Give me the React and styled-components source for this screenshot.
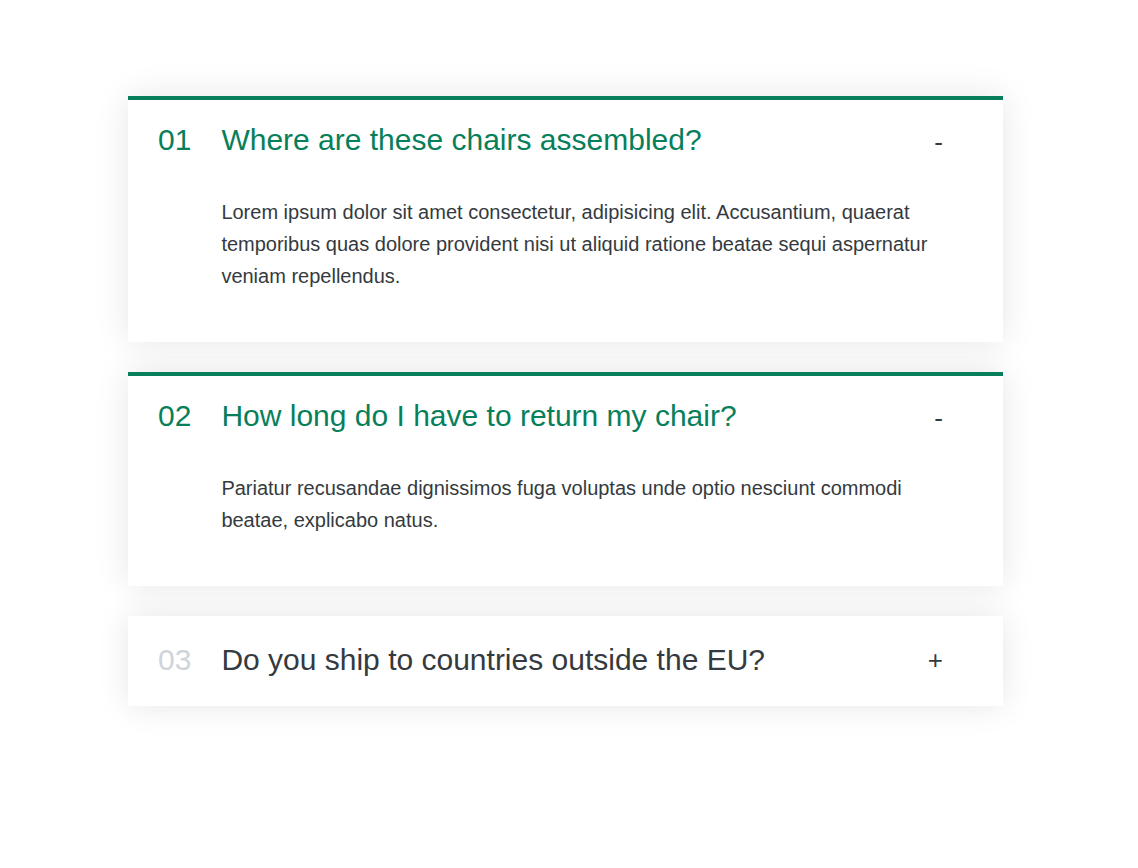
import React, { useState } from 'react'
import styled, { createGlobalStyle } from 'styled-components'

const GlobalStyle = createGlobalStyle`
  * {
    margin: 0;
    padding: 0;
    box-sizing: border-box;
  }
  html, body {
    min-height: 100%;
  }
  body {
    font-family: "Liberation Sans", Arial, sans-serif;
    color: #343a40;
    background: #fff;
    min-height: 100vh;
    padding: 96px 0 120px 128px;
  }
`

const faqs = [
  {
    title: 'Where are these chairs assembled?',
    text: 'Lorem ipsum dolor sit amet consectetur, adipisicing elit. Accusantium, quaerat temporibus quas dolore provident nisi ut aliquid ratione beatae sequi aspernatur veniam repellendus.',
  },
  {
    title: 'How long do I have to return my chair?',
    text: 'Pariatur recusandae dignissimos fuga voluptas unde optio nesciunt commodi beatae, explicabo natus.',
  },
  {
    title: 'Do you ship to countries outside the EU?',
    text: 'Excepturi velit laborum, perspiciatis nemo perferendis reiciendis aliquam possimus dolor sed! Dolore laborum ducimus veritatis facere molestias!',
  },
]

const Accordion = styled.div`
  width: 875px;
  display: flex;
  flex-direction: column;
  gap: 30px;
`

const Item = styled.div`
  background: #fff;
  border-top: 4px solid ${p => (p.$open ? '#087f5b' : '#fff')};
  box-shadow: 0 0 32px rgba(0, 0, 0, 0.1);
  padding: 20px 60px 26px 30px;
  display: grid;
  grid-template-columns: auto 1fr auto;
  column-gap: 30px;
  align-items: start;
  cursor: pointer;
`

const Number = styled.p`
  font-size: 30px;
  line-height: 40px;
  color: ${p => (p.$open ? '#087f5b' : '#ced4da')};
`

const Title = styled.p`
  font-size: 30px;
  line-height: 40px;
  color: ${p => (p.$open ? '#087f5b' : '#343a40')};
`

const Icon = styled.p`
  font-size: 26px;
  line-height: 36px;
  padding-top: ${p => (p.$open ? '4px' : '2px')};
  color: #343a40;
  text-align: right;
`

const Answer = styled.div`
  grid-column: 2 / -1;
  padding: 36px 0 24px;
  font-size: 20px;
  line-height: 32px;
  color: #343a40;
`

function AccordionItem({ num, title, text, open, onToggle }) {
  return (
    <Item $open={open} onClick={onToggle}>
      <Number $open={open}>{num < 10 ? `0${num}` : num}</Number>
      <Title $open={open}>{title}</Title>
      <Icon $open={open}>{open ? '-' : '+'}</Icon>
      {open && <Answer>{text}</Answer>}
    </Item>
  )
}

export default function App() {
  const [openItems, setOpenItems] = useState([0, 1])

  const toggle = i =>
    setOpenItems(cur => (cur.includes(i) ? cur.filter(x => x !== i) : [...cur, i]))

  return (
    <>
      <GlobalStyle />
      <Accordion>
        {faqs.map((faq, i) => (
          <AccordionItem
            key={faq.title}
            num={i + 1}
            title={faq.title}
            text={faq.text}
            open={openItems.includes(i)}
            onToggle={() => toggle(i)}
          />
        ))}
      </Accordion>
    </>
  )
}
